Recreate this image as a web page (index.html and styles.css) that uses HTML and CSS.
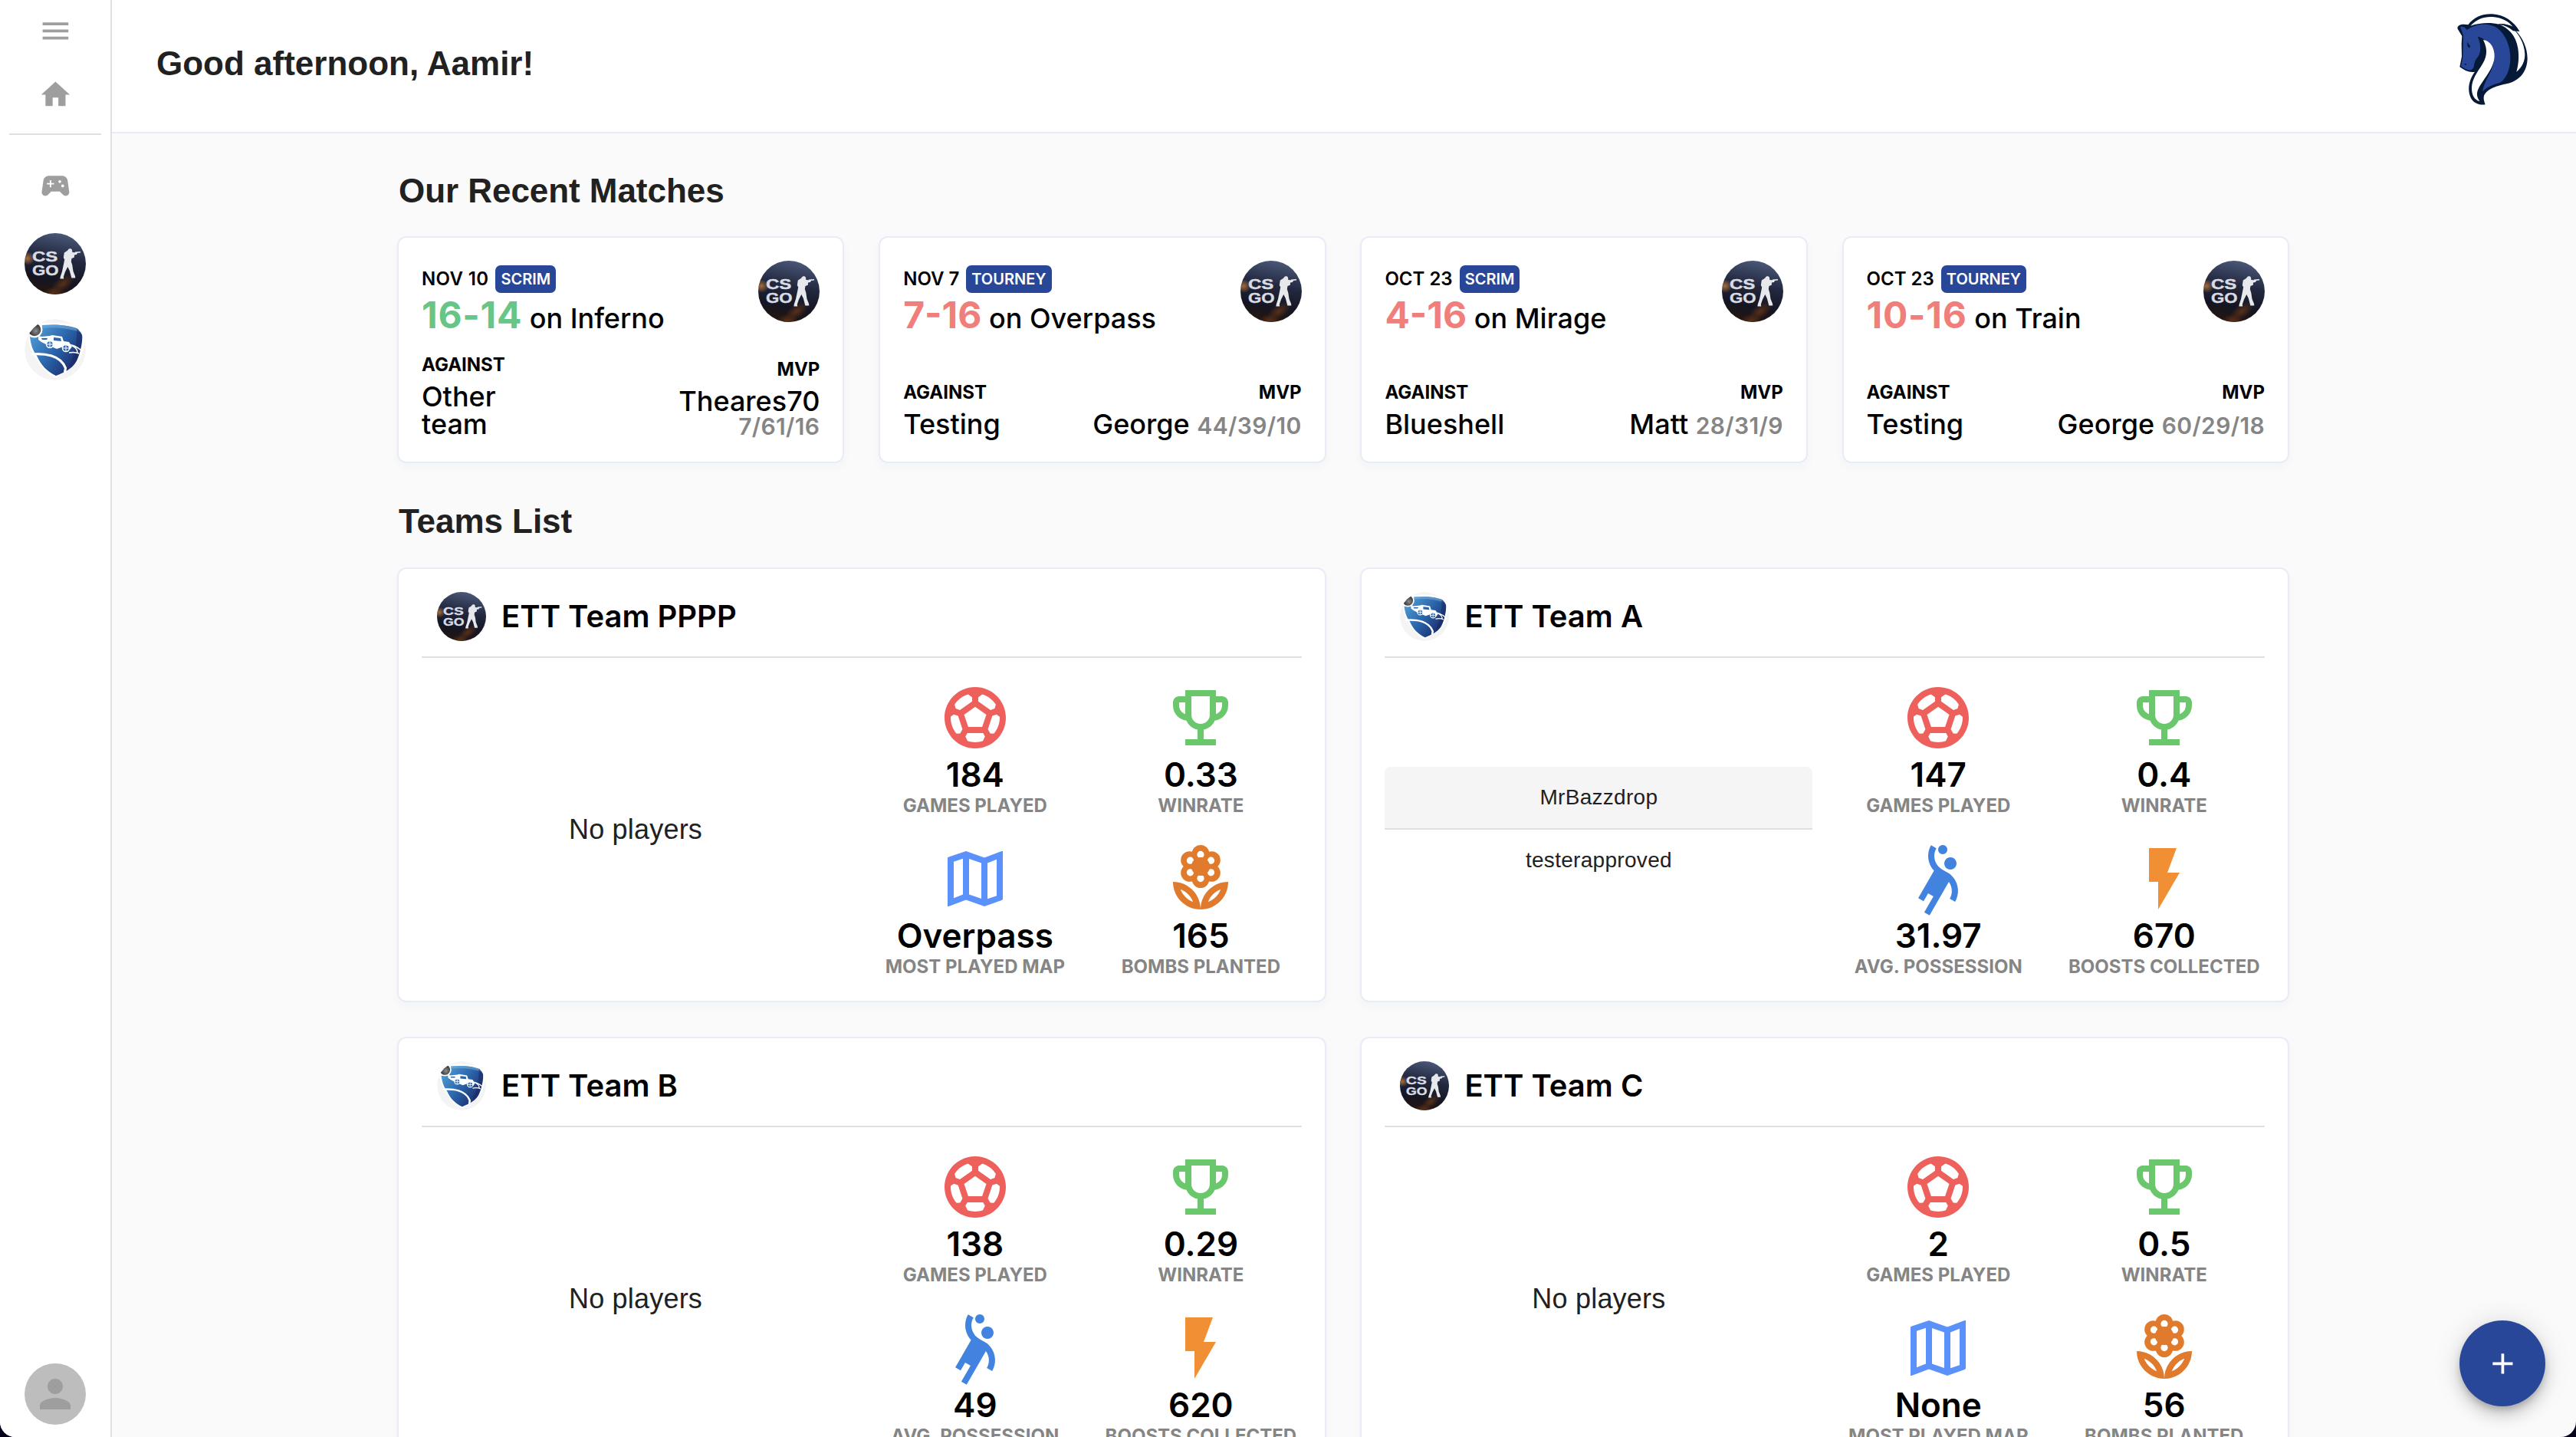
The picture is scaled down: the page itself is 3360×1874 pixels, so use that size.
FILE: index.html
```html
<!DOCTYPE html>
<html lang="en">
<head>
<meta charset="utf-8">
<title>Dashboard</title>
<link rel="stylesheet" href="styles.css">
</head>
<body>
<svg class="defs" width="0" height="0" aria-hidden="true">
  <defs>
    <linearGradient id="night" x1="0.6" y1="0" x2="0.4" y2="1">
      <stop offset="0" stop-color="#4a5878"/><stop offset="0.4" stop-color="#22283f"/><stop offset="0.75" stop-color="#151522"/><stop offset="1" stop-color="#24160f"/>
    </linearGradient>
    <radialGradient id="flame"><stop offset="0" stop-color="#a86c36"/><stop offset="1" stop-color="#a86c36" stop-opacity="0"/></radialGradient>
    <radialGradient id="ember"><stop offset="0" stop-color="#5a3018"/><stop offset="1" stop-color="#5a3018" stop-opacity="0"/></radialGradient>
    <linearGradient id="shield" x1="0.1" y1="0.2" x2="0.9" y2="0.8">
      <stop offset="0" stop-color="#4a94cf"/><stop offset="0.5" stop-color="#2a62a8"/><stop offset="1" stop-color="#1b2a6b"/>
    </linearGradient>
    <radialGradient id="ball" cx="0.6" cy="0.6"><stop offset="0" stop-color="#8d8d8d"/><stop offset="1" stop-color="#333"/></radialGradient>
    <clipPath id="round"><circle cx="40" cy="40" r="40"/></clipPath>
    <symbol id="csgo" viewBox="0 0 80 80">
      <g clip-path="url(#round)">
        <rect width="80" height="80" fill="url(#night)"/>
        <ellipse cx="4" cy="33" rx="10" ry="9" fill="url(#flame)"/>
        <ellipse cx="50" cy="66" rx="18" ry="9" fill="url(#ember)" transform="rotate(-35 50 66)"/>
        <ellipse cx="38" cy="78" rx="14" ry="8" fill="url(#ember)"/>
      </g>
      <g class="logo-text">
        <text transform="translate(10 37) scale(1.300 1)">CS</text>
        <text transform="translate(10 55) scale(1.200 1)">GO</text>
      </g>
      <path fill="#e6e8ec" d="M57 21.500c1-1.600 4.500-1.600 5 .5l.3 3 3.700.3V24.500l7-.5v1.500l-4 .6-1 1.900-3 .4-.2 3.400-3.300 1.200-.7 4 1.500 4.700 1.200 8L66 56l.3 2.500h-5l-2.500-9.500-2.500-5-3.300 6.500-2.200 6.500.4 2.500h-4.800l.3-2.500L49 50l2.200-10.500 1-5L50.800 32l1-6.500 4-2.500z"/>
    </symbol>
    <symbol id="rocket" viewBox="0 0 80 80">
      <g clip-path="url(#round)">
        <circle cx="40" cy="40" r="40" fill="#f4f4f4"/>
        <path fill="#fff" d="M0 17C8 4 14 4 24 5c20-1 38 0 54 8.500 1 14 0 26-5 37C66 61 54 69 41 77 30 72 22 64 17 54 8 43 5 31 4 17z"/>
        <path fill="url(#shield)" d="M7 23c6 2 15-4 16-15 19-1.500 37-.5 52 7 .8 10 .2 17-2 25-3 12-6 19-13 24-6 5-12 7-19 10C29 68 22 61 16 48 10 40 8 32 7 23z"/>
        <path fill="#7db4de" opacity=".5" d="M23 8c19-1.500 37-.5 52 7v3C58 12 40 10 23 12z"/>
        <path fill="#1a2560" opacity=".5" d="M75 15c1 17-3 35-15 49l-1-5c6-12 10-27 9-46z"/>
        <path fill="none" stroke="#fff" stroke-width="3.200" d="M9 46c17-1.500 38 1 44.500 18l-1 6"/>
        <circle cx="13" cy="14" r="10.500" fill="#fff"/><circle cx="13" cy="14" r="8.300" fill="url(#ball)"/>
        <g fill="none" stroke="#fff" stroke-width="1.500">
          <path fill="#fff" stroke="none" d="M18 22l4 1 11-1 3-1 13 2 2 6 7 1 4 6-3 4-8-4-9 3-12-5-8-4-4-3z"/>
          <path fill="#2d65a8" stroke="none" d="M38 24l9 1 1 4-10-1zM22 25l8 0-1 2-6 0z"/>
          <circle cx="33" cy="33" r="4.500" fill="#3a7bbd"/><circle cx="54" cy="38" r="4.500" fill="#2d65a8"/>
          <path stroke="#fff" stroke-width="1" d="M29 33h8M33 29v8M50 38h8M54 34v8"/>
          <path d="M55 34c8-1 13 2 19 7M58 44c5-1 9-1 13 1M62 35c5 2 7 5 7 9"/>
        </g>
      </g>
    </symbol>
    <symbol id="soccer" viewBox="0 0 24 24"><path fill="#ee605c" fill-rule="evenodd" d="M12 2C6.480 2 2 6.480 2 12s4.480 10 10 10 10-4.480 10-10S17.520 2 12 2zm1 3.300 1.350-.95c1.820.56 3.370 1.760 4.380 3.340l-.39 1.340-1.350.46L13 6.700V5.300zm-3.350-.95L11 5.300v1.400L7.010 9.490l-1.350-.46-.39-1.340c1.010-1.570 2.560-2.770 4.380-3.340zM7.080 17.110l-1.140.1C4.730 15.810 4 13.990 4 12c0-.12.01-.23.020-.35l1-.73 1.380.48 1.460 4.340-.78 1.370zm7.420 2.480c-.79.26-1.630.41-2.500.41s-1.710-.15-2.500-.41l-.69-1.490.64-1.100h5.110l.64 1.110-.7 1.480zM14.270 15H9.730l-1.350-4.020L12 8.440l3.630 2.540L14.270 15zm3.790 2.210-1.140-.1-.79-1.370 1.460-4.340 1.390-.47 1 .73c.01.11.020.22.020.34 0 1.990-.73 3.810-1.940 5.210z"/></symbol>
    <symbol id="trophy" viewBox="0 0 24 24"><path fill="#6ac76c" d="M19 5h-2V3H7v2H5c-1.100 0-2 .9-2 2v1c0 2.550 1.920 4.630 4.390 4.940.63 1.500 1.980 2.630 3.610 2.960V19H7v2h10v-2h-4v-3.100c1.630-.33 2.980-1.460 3.610-2.960C19.080 12.630 21 10.550 21 8V7c0-1.100-.9-2-2-2zM5 8V7h2v3.820C5.840 10.400 5 9.300 5 8zm7 6c-1.650 0-3-1.350-3-3V5h6v6c0 1.650-1.350 3-3 3zm7-6c0 1.300-.84 2.400-2 2.820V7h2v1z"/></symbol>
    <symbol id="map" viewBox="0 0 24 24"><path fill="#5b91fa" fill-rule="evenodd" d="M3.400 4.900 9 3l6 2.100 5.600-2.080L21 3v15.700l-.36.300L15 21l-6-2.100-5.640 2.080L3 21V5.100zM14 18.530l-4-1.400V5.470l4 1.400zM5 6.460l3-1.010v11.700l-3 1.160zM19 17.540l-3 1.010V6.860l3-1.160z"/></symbol>
    <symbol id="flower" viewBox="0 0 24 24">
      <g fill="#e07a2c"><circle cx="12" cy="3.850" r="2.850"/><circle cx="12" cy="12.150" r="2.850"/><circle cx="8.400" cy="5.920" r="2.850"/><circle cx="15.600" cy="5.920" r="2.850"/><circle cx="8.400" cy="10.080" r="2.850"/><circle cx="15.600" cy="10.080" r="2.850"/><circle cx="12" cy="8" r="4"/></g>
      <g fill="#fff"><circle cx="12" cy="4.100" r="1.150"/><circle cx="12" cy="11.900" r="1.150"/><circle cx="8.620" cy="6.050" r="1.150"/><circle cx="15.380" cy="6.050" r="1.150"/><circle cx="8.620" cy="9.950" r="1.150"/><circle cx="15.380" cy="9.950" r="1.150"/></g>
      <circle cx="12" cy="8" r="3" fill="#e07a2c"/>
      <path fill="#e07a2c" fill-rule="evenodd" d="M12 22c4.970 0 9-4.030 9-9-4.970 0-9 4.030-9 9zm2.440-2.440c.71-1.900 2.220-3.420 4.120-4.120-.71 1.900-2.220 3.410-4.120 4.120zM3 13c0 4.970 4.030 9 9 9 0-4.970-4.030-9-9-9zm2.440 2.440c1.900.71 3.420 2.220 4.120 4.120-1.900-.71-3.410-2.220-4.120-4.120z"/>
    </symbol>
    <symbol id="handball" viewBox="0 0 24 24"><path fill="#4183df" d="M14.270 6c-.55.95-.22 2.180.73 2.730.95.55 2.180.22 2.730-.73.55-.95.22-2.180-.73-2.730-.95-.55-2.180-.22-2.730.73zM15.840 10.410s-1.630-.94-2.600-1.500c-2.380-1.380-3.200-4.440-1.820-6.820l-1.730-1C8.100 3.830 8.600 7.210 10.660 9.400l-5.150 8.920 1.730 1 1.500-2.600 1.730 1-3 5.200 1.730 1 6.290-10.890c1.140 1.550 1.330 3.690.31 5.460l1.730 1c1.600-2.750 1.280-6.580-1.690-9.080zM12.750 3.800c.72.41 1.630.17 2.050-.55.41-.72.17-1.630-.55-2.050-.72-.41-1.630-.17-2.050.55-.41.72-.17 1.640.55 2.050z"/></symbol>
    <symbol id="bolt" viewBox="0 0 24 24"><path fill="#f08f33" d="M7 2v11h3v9l7-12h-4l3-8z"/></symbol>
  </defs>
</svg>

<div class="app">
  <nav class="sidebar">
    <div class="nav-top">
      <svg class="nav-icon" viewBox="0 0 24 24"><path d="M3 18h18v-2H3v2zm0-5h18v-2H3v2zm0-7v2h18V6H3z"/></svg>
      <svg class="nav-icon" viewBox="0 0 24 24"><path d="M10 20v-6h4v6h5v-8h3L12 3 2 12h3v8z"/></svg>
    </div>
    <div class="nav-games">
      <svg class="nav-icon" viewBox="0 0 24 24"><path d="M21.580 16.090l-1.090-7.660C20.210 6.460 18.520 5 16.530 5H7.470C5.480 5 3.790 6.460 3.510 8.430l-1.090 7.660C2.200 17.630 3.390 19 4.940 19c.68 0 1.320-.27 1.800-.75L9 16h6l2.250 2.250c.48.48 1.130.75 1.800.75 1.560 0 2.750-1.370 2.530-2.910zM11 11H9v2H8v-2H6v-1h2V8h1v2h2v1zm4-1c-.55 0-1-.45-1-1s.45-1 1-1 1 .45 1 1-.45 1-1 1zm2 3c-.55 0-1-.45-1-1s.45-1 1-1 1 .45 1 1-.45 1-1 1z"/></svg>
      <svg class="logo"><use href="#csgo"/></svg>
      <svg class="logo"><use href="#rocket"/></svg>
    </div>
    <div class="avatar"><svg viewBox="0 0 24 24"><path d="M12 12c2.210 0 4-1.790 4-4s-1.790-4-4-4-4 1.790-4 4 1.790 4 4 4zm0 2c-2.670 0-8 1.340-8 4v2h16v-2c0-2.660-5.330-4-8-4z"/></svg></div>
  </nav>

  <div class="page">
    <header class="header">
      <h1 class="title">Good afternoon, Aamir!</h1>
      <svg class="horse" viewBox="138 52 280 362">
        <path fill="#061a38" d="M181 98C205 66 240 54 276 56c46 3 82 27 106 67l-14-1c28 30 44 66 45 106 0 52-30 88-78 100-40 9-73 16-90 43-5 10-4 20 3 39-26 3-45-6-56-25-16-32-8-72 15-103-20 4-38-4-59-19l8-41-1-50 2-30-17-28c-4-14 14-21 41-16z"/>
        <path fill="#fff" d="M190 102c24-26 54-37 86-35 36 2 62 17 80 38-18-8-38-12-58-10 40 14 70 45 78 95 5 35 2 65-6 92 24-18 34-45 33-70-2-44-26-84-56-106l-44-9c-36-10-78-6-113 5z"/>
        <path fill="#061a38" d="M298 94c30-2 60 8 84 29l-25-1c-16-14-36-24-59-28z"/>
        <path fill="#294799" d="M150 106c9-3 19 0 26 12 32-25 85-30 118-8 36 28 54 76 52 124-1 38-15 74-40 90-28 7-52 18-69 35 5-28 20-54 34-82 19-41 17-91-22-118-10-8-20-12-31-15 10 10 14 28 18 41-1 25-17 39-28 56-4 20-6 30-17 34-13 2-25-6-38-15l7-35 1-48 1-38z"/>
        <path fill="#061a38" d="M218 144c28 14 36 34 28 62-9 32-38 49-38 78-4-20-6-38 5-53 20-19 20-55 5-87z"/>
        <path fill="#fff" d="M240 157c30 3 45 35 44 66-2 42-34 77-57 114-12 20-17 38-1 60-22-5-31-25-31-51 1-34 20-60 37-86 21-32 29-62 8-103z"/>
        <path fill="none" stroke="#061a38" stroke-width="3" stroke-dasharray="2 3" d="M330 140c30 54 28 124-12 180M336 146c30 54 28 120-12 174"/>
        <path fill="#061a38" d="M177 165l12 16-3 8-7-6zM166 250l7 0 1 5-5 1z"/>
      </svg>
    </header>

    <main class="content">
      <h2 class="section-title">Our Recent Matches</h2>
      <div class="matches">
        <article class="card match">
          <div class="match-top">
            <div>
              <div class="date wide">NOV 10 <span class="badge">SCRIM</span></div>
              <div class="result"><b class="win wide">16-14</b> on Inferno</div>
            </div>
            <svg class="logo"><use href="#csgo"/></svg>
          </div>
          <div class="match-bottom">
            <div><div class="label">AGAINST</div><div class="value">Other<br>team</div></div>
            <div class="mvp"><div class="label">MVP</div><div class="value">Theares70</div><div class="kda">7/61/16</div></div>
          </div>
        </article>
        <article class="card match">
          <div class="match-top">
            <div>
              <div class="date">NOV 7 <span class="badge">TOURNEY</span></div>
              <div class="result"><b class="loss">7-16</b> on Overpass</div>
            </div>
            <svg class="logo"><use href="#csgo"/></svg>
          </div>
          <div class="match-bottom">
            <div><div class="label">AGAINST</div><div class="value">Testing</div></div>
            <div class="mvp"><div class="label">MVP</div><div class="value">George <span class="kda">44/39/10</span></div></div>
          </div>
        </article>
        <article class="card match">
          <div class="match-top">
            <div>
              <div class="date">OCT 23 <span class="badge">SCRIM</span></div>
              <div class="result"><b class="loss">4-16</b> on Mirage</div>
            </div>
            <svg class="logo"><use href="#csgo"/></svg>
          </div>
          <div class="match-bottom">
            <div><div class="label">AGAINST</div><div class="value">Blueshell</div></div>
            <div class="mvp"><div class="label">MVP</div><div class="value">Matt <span class="kda">28/31/9</span></div></div>
          </div>
        </article>
        <article class="card match">
          <div class="match-top">
            <div>
              <div class="date">OCT 23 <span class="badge">TOURNEY</span></div>
              <div class="result"><b class="loss wide">10-16</b> on Train</div>
            </div>
            <svg class="logo"><use href="#csgo"/></svg>
          </div>
          <div class="match-bottom">
            <div><div class="label">AGAINST</div><div class="value">Testing</div></div>
            <div class="mvp"><div class="label">MVP</div><div class="value">George <span class="kda">60/29/18</span></div></div>
          </div>
        </article>
      </div>

      <h2 class="section-title teams-title">Teams List</h2>
      <div class="teams">
        <article class="card team">
          <div class="team-head"><svg class="team-logo"><use href="#csgo"/></svg><h3>ETT Team PPPP</h3></div>
          <div class="team-body">
            <div class="players"><p class="none">No players</p></div>
            <div class="stats">
              <div class="stat"><svg><use href="#soccer"/></svg><b>184</b><span>GAMES PLAYED</span></div>
              <div class="stat"><svg><use href="#trophy"/></svg><b>0.33</b><span>WINRATE</span></div>
              <div class="stat"><svg><use href="#map"/></svg><b>Overpass</b><span>MOST PLAYED MAP</span></div>
              <div class="stat"><svg><use href="#flower"/></svg><b>165</b><span>BOMBS PLANTED</span></div>
            </div>
          </div>
        </article>
        <article class="card team">
          <div class="team-head"><svg class="team-logo"><use href="#rocket"/></svg><h3>ETT Team A</h3></div>
          <div class="team-body">
            <ul class="players"><li class="player active">MrBazzdrop</li><li class="player">testerapproved</li></ul>
            <div class="stats">
              <div class="stat"><svg><use href="#soccer"/></svg><b>147</b><span>GAMES PLAYED</span></div>
              <div class="stat"><svg><use href="#trophy"/></svg><b>0.4</b><span>WINRATE</span></div>
              <div class="stat"><svg><use href="#handball"/></svg><b>31.97</b><span>AVG. POSSESSION</span></div>
              <div class="stat"><svg><use href="#bolt"/></svg><b>670</b><span>BOOSTS COLLECTED</span></div>
            </div>
          </div>
        </article>
        <article class="card team">
          <div class="team-head"><svg class="team-logo"><use href="#rocket"/></svg><h3>ETT Team B</h3></div>
          <div class="team-body">
            <div class="players"><p class="none">No players</p></div>
            <div class="stats">
              <div class="stat"><svg><use href="#soccer"/></svg><b>138</b><span>GAMES PLAYED</span></div>
              <div class="stat"><svg><use href="#trophy"/></svg><b>0.29</b><span>WINRATE</span></div>
              <div class="stat"><svg><use href="#handball"/></svg><b>49</b><span>AVG. POSSESSION</span></div>
              <div class="stat"><svg><use href="#bolt"/></svg><b>620</b><span>BOOSTS COLLECTED</span></div>
            </div>
          </div>
        </article>
        <article class="card team">
          <div class="team-head"><svg class="team-logo"><use href="#csgo"/></svg><h3>ETT Team C</h3></div>
          <div class="team-body">
            <div class="players"><p class="none">No players</p></div>
            <div class="stats">
              <div class="stat"><svg><use href="#soccer"/></svg><b>2</b><span>GAMES PLAYED</span></div>
              <div class="stat"><svg><use href="#trophy"/></svg><b>0.5</b><span>WINRATE</span></div>
              <div class="stat"><svg><use href="#map"/></svg><b>None</b><span>MOST PLAYED MAP</span></div>
              <div class="stat"><svg><use href="#flower"/></svg><b>56</b><span>BOMBS PLANTED</span></div>
            </div>
          </div>
        </article>
      </div>
    </main>
  </div>
  <button class="fab" aria-label="Add"><svg viewBox="0 0 24 24"><path d="M19 13h-6v6h-2v-6H5v-2h6V5h2v6h6v2z"/></svg></button>
</div>
</body>
</html>
```
FILE: styles.css
```css
* { box-sizing: border-box; margin: 0; padding: 0; }
html, body { height: 100%; overflow: hidden; background: #07001a; }
body { font-family: Inter, sans-serif; color: #000; }
svg { display: block; flex: none; }
.defs { position: absolute; }

.app {
  display: flex;
  height: 1874px;
  background: #fafafa;
  border-radius: 0 0 20px 20px;
  overflow: hidden;
}

/* Sidebar */
.sidebar {
  width: 146px;
  flex: none;
  display: flex;
  flex-direction: column;
  background: #fff;
  border-right: 2px solid #e0e0e0;
}
.nav-top {
  height: 176px;
  margin: 0 12px;
  padding-top: 17.6px;
  display: flex;
  flex-direction: column;
  align-items: center;
  gap: 39px;
  border-bottom: 2px solid #e0e0e0;
}
.nav-icon { width: 44.800px; height: 44.800px; fill: #9e9e9e; }
.nav-games {
  padding-top: 43.600px;
  display: flex;
  flex-direction: column;
  align-items: center;
}
.nav-games .nav-icon { margin-bottom: 39.600px; }
.nav-games .logo { margin-bottom: 32px; }
.logo { width: 80px; height: 80px; }
.logo-text {
  font: 700 18.500px "Liberation Sans", sans-serif;
  fill: #d9dce2;
  stroke: #d9dce2;
  stroke-width: .4px;
}
.avatar {
  width: 80px;
  height: 80px;
  margin: auto auto 16px;
  border-radius: 50%;
  background: #bdbdbd;
  display: grid;
  place-items: center;
}
.avatar svg { width: 60px; height: 60px; fill: #9e9e9e; }

/* Header */
.page { flex: 1; min-width: 0; display: flex; flex-direction: column; }
.header {
  height: 174px;
  flex: none;
  display: flex;
  justify-content: space-between;
  align-items: flex-start;
  padding: 17px 62px 0 58px;
  background: #fff;
  border-bottom: 2px solid #e8ecf6;
}
.title, .section-title {
  font: 700 44px/52px "Liberation Sans", Arial, sans-serif;
  color: #212121;
}
.title { padding-top: 40px; }
.horse { width: 93.300px; height: 120.700px; }

.content { width: 2468px; margin-left: 372px; padding-top: 49px; }
.section-title { padding-left: 2px; margin-bottom: 33px; letter-spacing: -.05px; }
.teams-title { margin: 50px 0 34px; }

.card {
  background: #fff;
  border: 2px solid #e8ecf8;
  border-radius: 12px;
  box-shadow: 0 6px 12px rgba(40, 60, 120, .03);
}

/* Match cards */
.matches { display: grid; grid-template-columns: repeat(4, 1fr); gap: 44.800px; }
.match {
  height: 296px;
  padding: 30px 30px 31px;
  display: flex;
  flex-direction: column;
  justify-content: space-between;
}
.match-top { display: flex; justify-content: space-between; }
.date {
  margin-top: 6px;
  display: flex;
  gap: 9px;
  font-size: 24px;
  line-height: 36px;
  font-weight: 600;
}
.badge {
  height: 36px;
  padding: 1px 7px 0;
  border-radius: 7px;
  background: #294799;
  color: #fff;
  font-size: 20px;
  line-height: 35px;
  letter-spacing: 0;
}
.result { margin-top: 5px; font-size: 36px; line-height: 56px; font-weight: 500; white-space: nowrap; }
.result b { font-size: 48px; line-height: 1; font-weight: 700; }
.wide { letter-spacing: .015em; }
.win { color: #67c587; }
.loss { color: #f07f7c; }
.match-bottom { display: flex; justify-content: space-between; align-items: flex-end; }
.label { font-size: 24px; line-height: 36px; font-weight: 700; margin-bottom: 5px; }
.value { font-size: 36px; line-height: 36px; font-weight: 500; }
.mvp { text-align: right; }
.kda { font-size: 30px; line-height: 30px; font-weight: 600; letter-spacing: .35px; color: #858585; }

/* Team cards */
.teams { display: grid; grid-template-columns: repeat(2, 1fr); gap: 45px 44.800px; }
.team { height: 567px; padding: 30px 30px 0; display: flex; flex-direction: column; }
.team-head {
  display: flex;
  gap: 20px;
  padding: 0 20px 20px;
  border-bottom: 2px solid #e0e0e0;
}
.team-logo { width: 64px; height: 64px; }
.team-head h3 { font-size: 40px; line-height: 64px; font-weight: 600; }
.team-body { flex: 1; display: flex; justify-content: space-between; margin-right: -16px; }
.players {
  width: 558px;
  display: flex;
  flex-direction: column;
  justify-content: center;
  list-style: none;
  font-family: "Liberation Sans", Arial, sans-serif;
  color: #212121;
  text-align: center;
}
.none { font-size: 36px; line-height: 40px; letter-spacing: .2px; }
.player { height: 82px; font-size: 28px; line-height: 80px; letter-spacing: .3px; }
.player.active { background: #f5f5f5; border-bottom: 2px solid #e0e0e0; border-radius: 8px 8px 0 0; }
.stats {
  width: 589px;
  padding-top: 30px;
  display: grid;
  grid-template-columns: 1fr 1fr;
  grid-auto-rows: 177px;
  row-gap: 33px;
}
.stat { display: flex; flex-direction: column; align-items: center; white-space: nowrap; }
.stat svg { width: 96px; height: 96px; }
.stat b { font-size: 44px; line-height: 52px; font-weight: 600; }
.stat span { margin-top: 1px; font-size: 24px; line-height: 28px; font-weight: 700; color: #858585; }

.fab {
  position: absolute;
  right: 40px;
  top: 1722px;
  width: 112px;
  height: 112px;
  border: 0;
  border-radius: 50%;
  background: #294799;
  display: grid;
  place-items: center;
  box-shadow: 0 6px 10px -2px rgba(0,0,0,.2), 0 12px 20px rgba(0,0,0,.14), 0 2px 36px rgba(0,0,0,.12);
}
.fab svg { width: 44.800px; height: 44.800px; fill: #fff; }
```
